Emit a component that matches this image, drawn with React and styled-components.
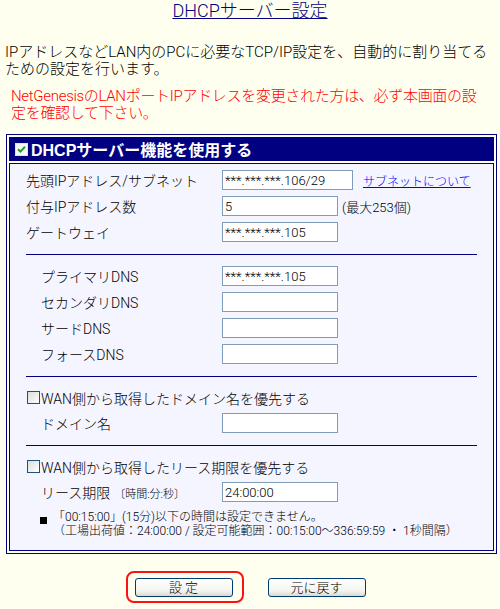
import React from 'react'
import styled, { createGlobalStyle } from 'styled-components'

const FONT = `Roboto, "Noto Sans CJK JP", sans-serif`

const GlobalStyle = createGlobalStyle`
  html, body {
    margin: 0;
    padding: 0;
    background: #fffff0;
  }
  body {
    font-family: ${FONT};
    font-weight: 300;
    color: #000;
  }
`

const Page = styled.div`
  width: 500px;
  height: 609px;
  overflow: hidden;
  background: #fffff0;
`

const Title = styled.h1`
  margin: 0;
  font-size: 18px;
  font-weight: 300;
  line-height: 22px;
  text-align: center;
  color: #000080;
  text-decoration: underline;
  text-decoration-thickness: 1px;
`

const Intro = styled.p`
  margin: 22px 0 0 5px;
  font-size: 15px;
  line-height: 17px;
  white-space: nowrap;
`

const Warning = styled.p`
  margin: 10px 0 0 11px;
  font-size: 15px;
  line-height: 17px;
  color: #ff0000;
  white-space: nowrap;
  letter-spacing: -0.3px;
`

const Frame = styled.div`
  margin: 12px 3px 0 6px;
  border: 1px solid #000080;
  padding: 2px;
  display: flex;
  flex-direction: column;
  gap: 2px;
`

const FrameHeader = styled.div`
  height: 24px;
  background: #000080;
  display: flex;
  align-items: center;
  gap: 3px;
  padding-left: 6px;
  color: #fff;
  font-family: "Liberation Sans", "Noto Sans CJK JP", sans-serif;
  font-size: 16px;
  font-weight: bold;
`

const FrameBody = styled.div`
  border: 1px solid #000080;
  background: #f5f5ff;
  padding: 6px 16px 12px 16px;
`

const Group = styled.div`
  display: flex;
  flex-direction: column;
  gap: 6px;
`

const Row = styled.div`
  display: grid;
  grid-template-columns: 196px auto;
  align-items: center;
  height: 20px;
`

const Label = styled.span`
  font-size: 14px;
  padding-left: ${p => (p.$indent ? 15 : 0)}px;
  white-space: nowrap;
`

const Small = styled.span`
  font-size: 11px;
  margin-left: 4px;
`

const Control = styled.div`
  display: flex;
  align-items: center;
`

const TextInput = styled.input`
  box-sizing: border-box;
  width: ${p => (p.$wide ? 131 : 116)}px;
  height: 20px;
  border: 1px solid #7f9db9;
  background: #fff;
  padding: 0 2px;
  margin: 0;
  font-family: ${FONT};
  font-weight: 300;
  font-size: 13px;
  color: #000;
  outline: none;
`

const HelpLink = styled.a`
  margin-left: 10px;
  font-size: 12px;
  color: #0000ff;
  text-decoration: underline;
  white-space: nowrap;
  &:visited {
    color: #0000ff;
  }
`

const Hint = styled.span`
  margin-left: 4px;
  font-size: 13px;
  white-space: nowrap;
`

const Rule = styled.hr`
  margin: 12px 0 11px 0;
  border: 0;
  border-top: 1px solid #000080;
  height: 0;
`

const CheckRow = styled.label`
  display: flex;
  align-items: center;
  gap: 1px;
  height: 19px;
  padding-left: 1px;
  font-size: 14px;
  white-space: nowrap;
`

const Box = styled.span`
  box-sizing: border-box;
  width: 13px;
  height: 13px;
  display: inline-flex;
  align-items: center;
  justify-content: center;
  border: 1px solid ${p => (p.$checked ? '#dde4ee' : '#1c5180')};
  background: ${p => (p.$checked ? 'linear-gradient(135deg, #f2f2f2, #ffffff)' : 'linear-gradient(135deg, #dcdcd7, #ffffff)')};
  flex: none;
`

const CheckBox = ({ checked }) => (
  <Box $checked={checked}>
    {checked && (
      <svg width="9" height="9" viewBox="0 0 9 9">
        <path d="M1 4.2 L3.4 6.6 L8 1.8" fill="none" stroke="#21a121" strokeWidth="2" />
      </svg>
    )}
  </Box>
)

const Note = styled.div`
  margin-top: 8px;
  display: flex;
  align-items: flex-start;
  font-size: 12px;
  line-height: 14px;
  white-space: nowrap;
`

const Bullet = styled.span`
  width: 7px;
  height: 7px;
  background: #000;
  margin: 7px 6px 0 14px;
  flex: none;
`

const ButtonBar = styled.div`
  margin-top: 24px;
  display: flex;
  justify-content: center;
  gap: 35px;
`

const Highlight = styled.span`
  position: relative;
  display: inline-flex;
  &::after {
    content: '';
    position: absolute;
    top: -7px;
    bottom: -6px;
    left: -9px;
    right: -11px;
    border: 2.5px solid #ff1010;
    border-radius: 8px;
    pointer-events: none;
  }
`

const Button = styled.button`
  box-sizing: border-box;
  width: 98px;
  height: 19px;
  margin: 0;
  padding: 0;
  border: 1px solid #003c74;
  border-radius: 3px;
  background: linear-gradient(#ffffff, #f4f4f0 70%, #dcd8cc);
  font-family: ${FONT};
  font-weight: 300;
  font-size: 13px;
  color: #000;
  line-height: 17px;
  cursor: pointer;
`

const App = () => {
  return (
    <Page>
      <GlobalStyle />
      <Title>DHCPサーバー設定</Title>
      <Intro>
        IPアドレスなどLAN内のPCに必要なTCP/IP設定を、自動的に割り当てる<br />
        ための設定を行います。
      </Intro>
      <Warning>
        NetGenesisのLANポートIPアドレスを変更された方は、必ず本画面の設<br />
        定を確認して下さい。
      </Warning>

      <Frame>
        <FrameHeader>
          <CheckBox checked />
          <span>DHCPサーバー機能を使用する</span>
        </FrameHeader>
        <FrameBody>
          <Group>
            <Row>
              <Label>先頭IPアドレス/サブネット</Label>
              <Control>
                <TextInput $wide defaultValue="***.***.***.106/29" />
                <HelpLink href="#">サブネットについて</HelpLink>
              </Control>
            </Row>
            <Row>
              <Label>付与IPアドレス数</Label>
              <Control>
                <TextInput defaultValue="5" />
                <Hint>(最大253個)</Hint>
              </Control>
            </Row>
            <Row>
              <Label>ゲートウェイ</Label>
              <Control>
                <TextInput defaultValue="***.***.***.105" />
              </Control>
            </Row>
          </Group>

          <Rule />

          <Group>
            <Row>
              <Label $indent>プライマリDNS</Label>
              <Control><TextInput defaultValue="***.***.***.105" /></Control>
            </Row>
            <Row>
              <Label $indent>セカンダリDNS</Label>
              <Control><TextInput /></Control>
            </Row>
            <Row>
              <Label $indent>サードDNS</Label>
              <Control><TextInput /></Control>
            </Row>
            <Row>
              <Label $indent>フォースDNS</Label>
              <Control><TextInput /></Control>
            </Row>
          </Group>

          <Rule />

          <Group>
            <CheckRow>
              <CheckBox />
              <span>WAN側から取得したドメイン名を優先する</span>
            </CheckRow>
            <Row>
              <Label $indent>ドメイン名</Label>
              <Control><TextInput /></Control>
            </Row>
          </Group>

          <Rule />

          <Group>
            <CheckRow>
              <CheckBox />
              <span>WAN側から取得したリース期限を優先する</span>
            </CheckRow>
            <Row>
              <Label $indent>
                リース期限<Small>〔時間:分:秒〕</Small>
              </Label>
              <Control><TextInput defaultValue="24:00:00" /></Control>
            </Row>
          </Group>

          <Note>
            <Bullet />
            <div>
              「00:15:00」(15分)以下の時間は設定できません。<br />
              （工場出荷値：24:00:00 / 設定可能範囲：00:15:00～336:59:59 ・ 1秒間隔）
            </div>
          </Note>
        </FrameBody>
      </Frame>

      <ButtonBar>
        <Highlight>
          <Button>設 定</Button>
        </Highlight>
        <Button>元に戻す</Button>
      </ButtonBar>
    </Page>
  )
}

export default App
